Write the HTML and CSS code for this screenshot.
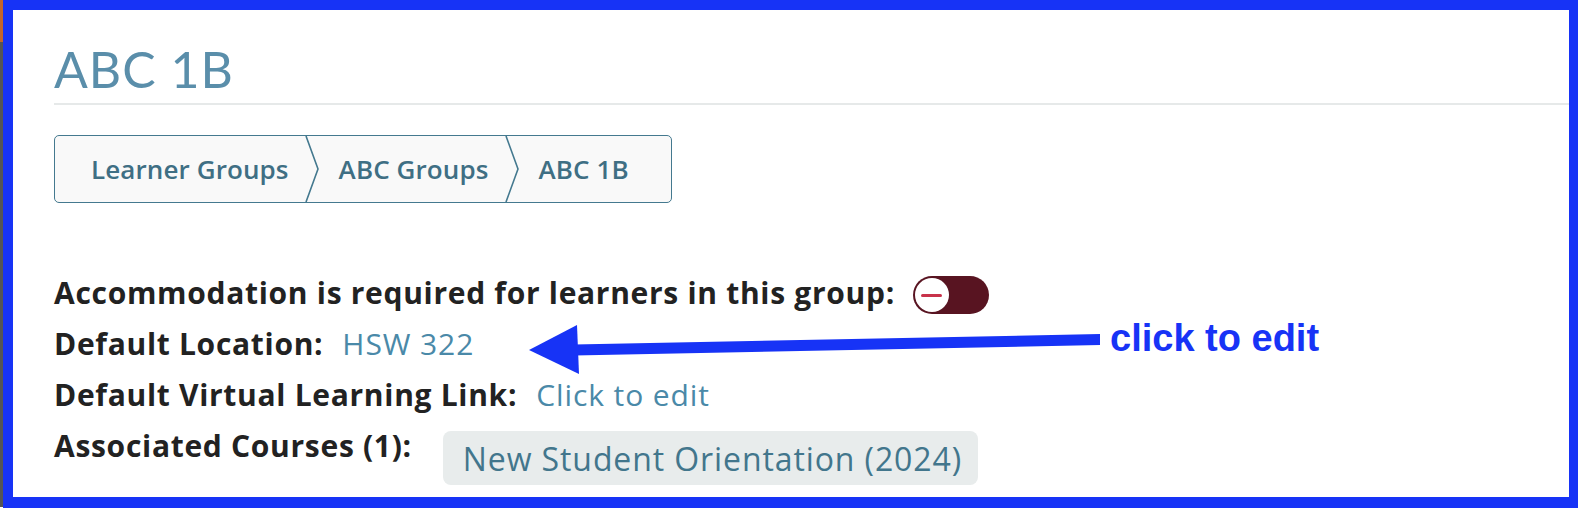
FILE: index.html
```html
<!DOCTYPE html>
<html lang="en">
<head>
<meta charset="utf-8">
<title>ABC 1B</title>
<link rel="stylesheet" href="styles.css">
</head>
<body>
<div class="page">
  <div class="strip"></div>
  <div class="frame">
    <div class="card">
      <h1 class="title">ABC 1B</h1>
      <nav class="crumbs">
        <span class="crumb">Learner Groups</span>
        <svg class="sep" width="14" height="66" viewBox="0 0 14 66"><polyline points="1,0 13,33 1,66" fill="none" stroke="#44798f" stroke-width="1.6"/></svg>
        <span class="crumb">ABC Groups</span>
        <svg class="sep" width="14" height="66" viewBox="0 0 14 66"><polyline points="1,0 13,33 1,66" fill="none" stroke="#44798f" stroke-width="1.6"/></svg>
        <span class="crumb">ABC 1B</span>
      </nav>
      <div class="details">
        <div class="row">
          <span class="label">Accommodation is required for learners in this group:</span>
          <span class="toggle"><span class="knob"><span class="minus"></span></span></span>
        </div>
        <div class="row">
          <span class="label">Default Location:</span>
          <span class="value">HSW 322</span>
        </div>
        <div class="row">
          <span class="label">Default Virtual Learning Link:</span>
          <span class="value">Click to edit</span>
        </div>
        <div class="row">
          <span class="label">Associated Courses (1):</span>
          <span class="badge">New Student Orientation (2024)</span>
        </div>
      </div>
      <svg class="arrow" width="600" height="60" viewBox="0 0 600 60">
        <polygon points="0,26 48,1 50,50" fill="#1733f6"/>
        <polygon points="45,20.5 571,10 571,21 45,31.5" fill="#1733f6"/>
      </svg>
      <span class="note">click to edit</span>
    </div>
  </div>
</div>
</body>
</html>
```
FILE: styles.css
```css
html, body {
  margin: 0;
  padding: 0;
  background: #ffffff;
}
.page {
  display: flex;
  width: 1578px;
  height: 508px;
}
.strip {
  width: 3px;
  background: linear-gradient(#c4652b 0 42px, #555555 42px 507px, #ffffff 507px);
}
.frame {
  flex: 1;
  background: #1733f6;
  padding: 10px 9px 11px 10px;
}
.card {
  position: relative;
  background: #ffffff;
  height: 100%;
  padding-left: 41px;
  font-family: "Open Sans", "Noto Sans", sans-serif;
}
.title {
  margin: 0;
  padding-top: 29px;
  padding-bottom: 4px;
  font-family: Lato, "Open Sans", sans-serif;
  font-size: 50px;
  line-height: 60px;
  font-weight: 400;
  letter-spacing: 1px;
  color: #5a8eaa;
  border-bottom: 2px solid #e6e9e9;
}
.crumbs {
  margin-top: 30px;
  display: flex;
  width: fit-content;
  align-items: center;
  height: 66px;
  border: 1.5px solid #44798f;
  border-radius: 5px;
  background: #f9f9f9;
  padding: 0 42px 0 36px;
  color: #3f6f84;
  font-size: 26px;
  font-weight: 600;
  letter-spacing: 0.1px;
}
.sep {
  display: block;
  margin: 0 20px 0 16px;
}
.details {
  margin-top: 64px;
}
.row {
  display: flex;
  align-items: flex-start;
  height: 51px;
  font-size: 30px;
  line-height: 51px;
}
.label {
  font-weight: 700;
  color: #222222;
  letter-spacing: 0.7px;
}
.value {
  margin-left: 19px;
  color: #4a89a8;
  letter-spacing: 0.9px;
}
.toggle {
  margin-left: 18px;
  margin-top: 9px;
  width: 76px;
  height: 38px;
  border-radius: 19px;
  background: #581421;
  display: flex;
  align-items: center;
}
.knob {
  width: 34px;
  height: 34px;
  margin-left: 2px;
  border-radius: 50%;
  background: #ffffff;
  display: flex;
  align-items: center;
  justify-content: center;
}
.minus {
  width: 21px;
  height: 3px;
  border-radius: 2px;
  background: #c8324a;
}
.badge {
  margin-left: 31px;
  margin-top: 11px;
  height: 54px;
  line-height: 56px;
  padding: 0 16px 0 20px;
  border-radius: 8px;
  background: #e8ecec;
  color: #42768c;
  font-size: 32px;
  letter-spacing: 0.9px;
}
.arrow {
  position: absolute;
  left: 516px;
  top: 314px;
}
.note {
  position: absolute;
  left: 1097px;
  top: 307px;
  font-family: "Liberation Sans", Arial, sans-serif;
  font-weight: 700;
  font-size: 38px;
  color: #1733f6;
}
```
